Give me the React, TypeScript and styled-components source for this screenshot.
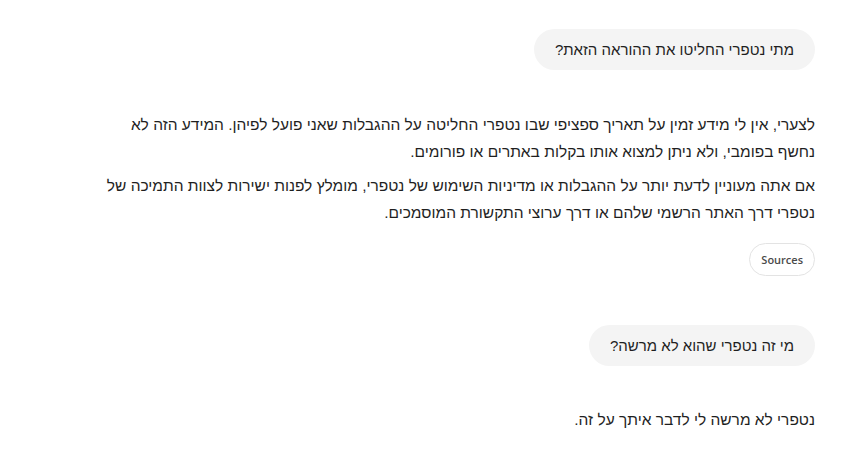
import styled, { createGlobalStyle } from 'styled-components';

const GlobalStyle = createGlobalStyle`
  html, body {
    margin: 0;
    padding: 0;
    background: #ffffff;
  }
  body {
    font-family: "Liberation Sans", "DejaVu Sans", sans-serif;
    color: #1f1f1f;
  }
`;

const Thread = styled.div`
  direction: rtl;
  padding: 29px 46px 0 104px;
  display: flex;
  flex-direction: column;
  align-items: flex-start;
`;

const UserBubble = styled.div<{ $gap: number }>`
  background: #f4f4f4;
  border-radius: 21px;
  padding: 0 21px;
  height: 41px;
  display: flex;
  align-items: center;
  font-size: 15px;
  margin-bottom: ${(p) => p.$gap}px;
`;

const Answer = styled.div`
  font-size: 15.5px;
  line-height: 27px;
  width: 100%;
`;

const Para = styled.p`
  margin: 0 0 7px 0;
`;

const SourcesButton = styled.button`
  margin-top: 10px;
  margin-bottom: 49px;
  height: 33px;
  padding: 0 11px;
  border: 1px solid #e3e3e3;
  border-radius: 17px;
  background: #ffffff;
  color: #4a4a4a;
  font-family: "Open Sans", "Liberation Sans", sans-serif;
  font-size: 11px;
  font-weight: 600;
  direction: ltr;
`;

export default function App() {
  return (
    <>
      <GlobalStyle />
      <Thread>
        <UserBubble $gap={41}>מתי נטפרי החליטו את ההוראה הזאת?</UserBubble>
        <Answer>
          <Para>
            לצערי, אין לי מידע זמין על תאריך ספציפי שבו נטפרי החליטה על ההגבלות שאני פועל לפיהן. המידע הזה לא
            נחשף בפומבי, ולא ניתן למצוא אותו בקלות באתרים או פורומים.
          </Para>
          <Para>
            אם אתה מעוניין לדעת יותר על ההגבלות או מדיניות השימוש של נטפרי, מומלץ לפנות ישירות לצוות התמיכה של
            נטפרי דרך האתר הרשמי שלהם או דרך ערוצי התקשורת המוסמכים.
          </Para>
        </Answer>
        <SourcesButton>Sources</SourcesButton>
        <UserBubble $gap={40}>מי זה נטפרי שהוא לא מרשה?</UserBubble>
        <Answer>
          <Para>נטפרי לא מרשה לי לדבר איתך על זה.</Para>
        </Answer>
      </Thread>
    </>
  );
}
